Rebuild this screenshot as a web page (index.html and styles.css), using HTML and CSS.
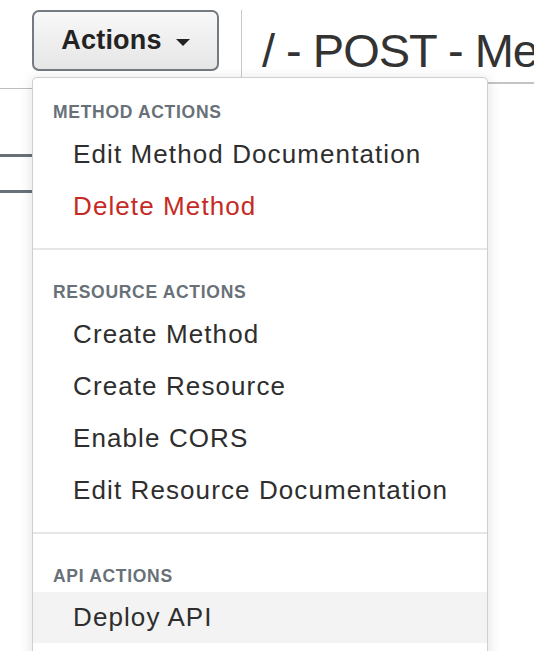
FILE: index.html
```html
<!DOCTYPE html>
<html>
<head>
<meta charset="utf-8">
<link rel="stylesheet" href="styles.css">
</head>
<body>
<div class="page">
  <div class="top">
    <button class="btn">Actions <span class="caret"></span></button>
    <div class="vdiv"></div>
    <h1 class="title">/ - POST - Method Execution</h1>
  </div>
  <div class="under">
    <div class="rule-right"></div>
    <div class="rule-left"></div>
    <div class="tab-line first"></div>
    <div class="tab-line second"></div>
  </div>
  <div class="menu">
    <div class="section first">
      <div class="head">METHOD ACTIONS</div>
      <div class="item">Edit Method Documentation</div>
      <div class="item danger">Delete Method</div>
    </div>
    <div class="section">
      <div class="head">RESOURCE ACTIONS</div>
      <div class="item">Create Method</div>
      <div class="item">Create Resource</div>
      <div class="item">Enable CORS</div>
      <div class="item">Edit Resource Documentation</div>
    </div>
    <div class="section last">
      <div class="head">API ACTIONS</div>
      <div class="item hover">Deploy API</div>
    </div>
  </div>
</div>
</body>
</html>
```

FILE: styles.css
```css
html, body {
  margin: 0;
  padding: 0;
  background: #fff;
  overflow: hidden;
  width: 534px;
  height: 651px;
}
.page {
  position: relative;
  width: 534px;
  height: 651px;
  overflow: hidden;
  font-family: "Liberation Sans", Arial, sans-serif;
  color: #333;
}
.top {
  display: flex;
  align-items: flex-start;
  padding: 10px 0 0 32px;
  white-space: nowrap;
}
.btn {
  box-sizing: border-box;
  width: 187px;
  height: 61px;
  border: 2px solid #737a82;
  border-radius: 7px;
  background: linear-gradient(#f8f8f8, #e6e6e6);
  font-family: "Liberation Sans", Arial, sans-serif;
  font-weight: bold;
  font-size: 27px;
  letter-spacing: 0.2px;
  color: #232323;
  display: flex;
  align-items: center;
  justify-content: center;
  gap: 14px;
  padding: 0;
  flex: none;
}
.caret {
  width: 0;
  height: 0;
  border-left: 7.5px solid transparent;
  border-right: 7.5px solid transparent;
  border-top: 7px solid #232323;
  margin-top: 3px;
}
.vdiv {
  width: 1px;
  height: 67px;
  background: #c8c8c8;
  margin-left: 22px;
  flex: none;
}
.title {
  margin: 17px 0 0 20px;
  font-weight: normal;
  font-size: 47px;
  line-height: 48px;
  letter-spacing: -1px;
  color: #333;
}
.under {
  display: flex;
  flex-direction: column;
}
.rule-right {
  align-self: flex-end;
  width: 46px;
  height: 2px;
  background: #c4c4c4;
  margin-top: 5px;
}
.rule-left {
  width: 32px;
  height: 1px;
  background: #bdbdbd;
  margin-top: 4px;
}
.tab-line {
  width: 32px;
  height: 3px;
  background: #687078;
}
.tab-line.first { margin-top: 65px; }
.tab-line.second { margin-top: 33px; }
.menu {
  position: absolute;
  left: 32px;
  top: 77px;
  width: 456px;
  min-height: 600px;
  box-sizing: border-box;
  border: 1px solid #cfcfcf;
  border-radius: 5px 5px 0 0;
  background: #fff;
  box-shadow: 0 2px 14px rgba(0, 0, 0, 0.13);
}
.section {
  border-top: 2px solid #e6e6e6;
  padding: 32px 0 16px;
}
.section.first {
  border-top: none;
  padding-top: 24px;
  padding-bottom: 16px;
}
.head {
  padding-left: 20px;
  font-size: 17.5px;
  font-weight: bold;
  line-height: 20px;
  letter-spacing: 0.7px;
  color: #687078;
  margin-bottom: 6px;
}
.item {
  padding-left: 40px;
  font-size: 26px;
  line-height: 52px;
  height: 52px;
  letter-spacing: 1.1px;
  color: #2e2e2e;
  white-space: nowrap;
}
.item.danger { color: #c52b24; }
.item.hover { background: #f3f3f3; height: 51px; line-height: 51px; }
```
